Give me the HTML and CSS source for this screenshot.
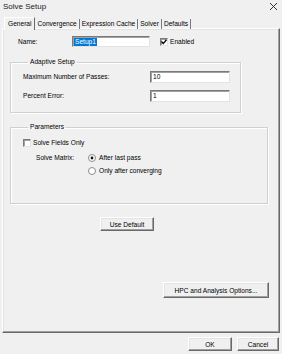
FILE: index.html
```html
<!DOCTYPE html>
<html lang="en">
<head>
    <title>Solve Setup</title>
    <link rel="stylesheet" href="styles.css">
</head>
<body>
    <div class="titlebar">
        <span class="title">Solve Setup</span>
        <svg class="close" width="9" height="9" viewBox="0 0 9 9"><path d="M1 1L8 8M8 1L1 8" stroke="#333" stroke-width="1"/></svg>
    </div>
    <div class="tabs">
        <span class="tab active">General</span>
        <span class="tab">Convergence</span>
        <span class="tab">Expression Cache</span>
        <span class="tab">Solver</span>
        <span class="tab">Defaults</span>
    </div>
    <div class="panel">
        <div class="name-row">
            <span class="name-label">Name:</span>
            <span class="input name-input"><span class="sel">Setup1</span></span>
            <span class="check checked">
                <svg width="6" height="6" viewBox="0 0 6 6"><path d="M0.5 2.5L2.3 4.5L5.5 0.8" fill="none" stroke="#000" stroke-width="1.3"/></svg>
            </span>
            <span class="check-label">Enabled</span>
        </div>
        <fieldset class="group adaptive">
            <legend>Adaptive Setup</legend>
            <div class="field-row">
                <span class="field-label">Maximum Number of Passes:</span>
                <span class="input field-input">10</span>
            </div>
            <div class="field-row">
                <span class="field-label">Percent Error:</span>
                <span class="input field-input">1</span>
            </div>
        </fieldset>
        <fieldset class="group params">
            <legend>Parameters</legend>
            <div class="fields-only">
                <span class="check"></span>
                <span class="check-label">Solve Fields Only</span>
            </div>
            <div class="matrix">
                <span class="matrix-label">Solve Matrix:</span>
                <div class="radios">
                    <div class="radio-row">
                        <svg class="radio" width="8" height="8" viewBox="0 0 8 8"><circle cx="4" cy="4" r="3.5" fill="#fff" stroke="#8a8a8a"/><circle cx="4" cy="4" r="1.4" fill="#111"/></svg>
                        <span>After last pass</span>
                    </div>
                    <div class="radio-row">
                        <svg class="radio" width="8" height="8" viewBox="0 0 8 8"><circle cx="4" cy="4" r="3.5" fill="#fff" stroke="#8a8a8a"/></svg>
                        <span>Only after converging</span>
                    </div>
                </div>
            </div>
        </fieldset>
        <button class="btn use-default">Use Default</button>
        <div class="hpc-row">
            <button class="btn hpc">HPC and Analysis Options...</button>
        </div>
    </div>
    <div class="footer">
        <button class="btn ok">OK</button>
        <button class="btn cancel">Cancel</button>
    </div>
</body>
</html>
```
FILE: styles.css
```css
* {
    margin: 0;
    padding: 0;
    box-sizing: border-box;
}
body {
    background: #f0f0f0;
    color: #000;
    font-family: "Liberation Sans", Arial, sans-serif;
    font-size: 6.6px;
    line-height: 8px;
    width: 282px;
    height: 354px;
    overflow: hidden;
}
.titlebar {
    display: flex;
    justify-content: space-between;
    align-items: center;
    height: 15px;
    padding: 0 3px 2px 3px;
}
.title {
    font-size: 8px;
    color: #222;
}
.close {
    margin-right: 1px;
}
.tabs {
    display: flex;
    margin-left: 4px;
    height: 13px;
    padding-top: 2px;
}
.tab {
    padding: 1px 2px 0 2px;
    border-right: 1px solid #7a7a7a;
    height: 10px;
    margin-top: 2px;
}
.active {
    height: 13px;
    margin-top: 0;
    padding: 2px 3px 0 3px;
    border-top: 1px solid #fff;
    border-left: 1px solid #fff;
    border-right: 1px solid #696969;
    background: #f0f0f0;
    position: relative;
    z-index: 1;
    margin-bottom: -1px;
}
.panel {
    margin: 0 2px;
    height: 305px;
    border: 1px solid;
    border-color: #fff #696969 #696969 #fff;
    box-shadow: inset -1px -1px #a0a0a0, inset 1px 1px #e3e3e3;
    padding: 7px 0 0 15px;
    display: flex;
    flex-direction: column;
    align-items: flex-start;
}
.name-row {
    display: flex;
    align-items: center;
    height: 11px;
}
.name-label {
    width: 54px;
}
.input {
    display: flex;
    align-items: center;
    background: #fff;
    border: 1px solid;
    border-color: #7a7a7a #e3e3e3 #e3e3e3 #7a7a7a;
    box-shadow: inset 1px 1px #a0a0a0;
    padding-left: 2px;
}
.name-input {
    width: 78px;
    height: 11px;
    padding-left: 1px;
}
.sel {
    background: #0078d7;
    color: #fff;
    padding: 0 1px;
    line-height: 8px;
}
.check {
    display: flex;
    align-items: center;
    justify-content: center;
    width: 8px;
    height: 8px;
    background: #fff;
    border: 1px solid;
    border-color: #7a7a7a #e3e3e3 #e3e3e3 #7a7a7a;
    box-shadow: inset 1px 1px #a0a0a0;
}
.name-row .check {
    margin-left: 10px;
}
.check-label {
    margin-left: 2px;
}
.group {
    border: 1px solid #d0d0d0;
    box-shadow: inset 1px 1px #fff, 1px 1px #fff;
    margin-left: -8px;
}
.group legend {
    margin-left: 5px;
    padding: 0 2px;
}
.adaptive {
    width: 231px;
    margin-top: 11px;
    padding: 5px 0 10px 12px;
}
.field-row {
    display: flex;
    align-items: center;
}
.field-row + .field-row {
    margin-top: 7px;
}
.field-label {
    width: 127px;
}
.field-input {
    width: 80px;
    height: 12px;
}
.params {
    width: 258px;
    height: 81px;
    margin-top: 10px;
    padding: 8px 0 0 12px;
}
.fields-only {
    display: flex;
    align-items: center;
}
.matrix {
    display: flex;
    margin: 6px 0 0 13px;
}
.matrix-label {
    width: 52px;
    margin-top: 1px;
}
.radio-row {
    display: flex;
    align-items: center;
    height: 9px;
}
.radio-row + .radio-row {
    margin-top: 4px;
}
.radio {
    margin-right: 3px;
}
.btn {
    font-family: inherit;
    font-size: 6.6px;
    color: #000;
    background: #f0f0f0;
    border: 1px solid;
    border-color: #fff #696969 #696969 #fff;
    box-shadow: inset -1px -1px #a0a0a0, inset 1px 1px #e3e3e3;
}
.use-default {
    width: 54px;
    height: 14px;
    margin: 13px 0 0 82px;
}
.hpc-row {
    align-self: stretch;
    display: flex;
    justify-content: flex-end;
    padding-right: 10px;
}
.hpc {
    width: 106px;
    height: 16px;
    margin-top: 51px;
}
.footer {
    display: flex;
    justify-content: flex-end;
    gap: 5px;
    padding: 4px 3px 0 0;
}
.ok {
    width: 44px;
    height: 14px;
}
.cancel {
    width: 42px;
    height: 14px;
}
```
